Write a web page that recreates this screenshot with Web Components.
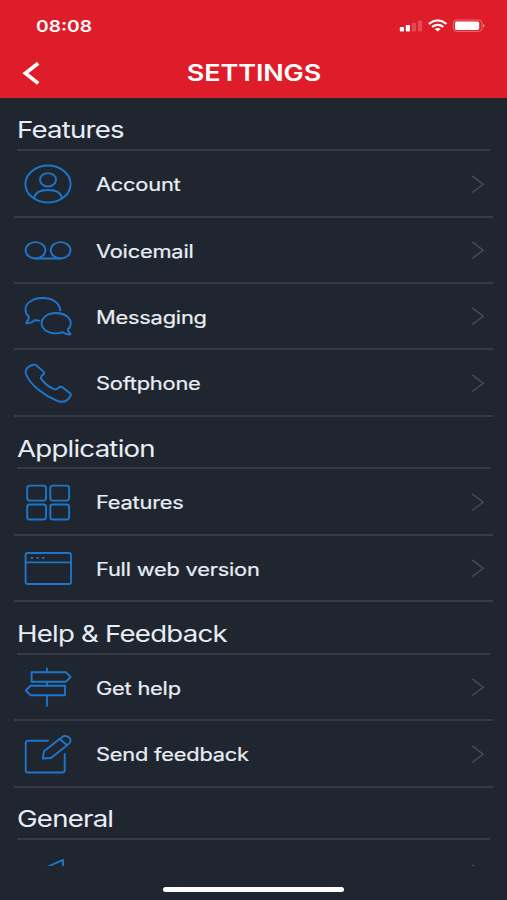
<!DOCTYPE html>
<html lang="en">
<head>
<meta charset="utf-8">
<meta name="viewport" content="width=device-width">
<title>Settings</title>
<style>
	html,body{
		height:100%;
		margin:0;
		overflow:hidden;
		background:#202630
	}

	body{
		font-family:Inter,"Liberation Sans",sans-serif;
		color:#e9edf5
	}
</style>
</head>
<body>
<settings-app>
	<status-bar slot="header" time="08:08"></status-bar>
	<nav-bar slot="header">SETTINGS</nav-bar>

	<settings-section heading="Features">
		<settings-row icon="account">Account</settings-row>
		<settings-row icon="voicemail">Voicemail</settings-row>
		<settings-row icon="messaging">Messaging</settings-row>
		<settings-row icon="softphone">Softphone</settings-row>
	</settings-section>
	<settings-section heading="Application">
		<settings-row icon="features">Features</settings-row>
		<settings-row icon="web">Full web version</settings-row>
	</settings-section>
	<settings-section heading="Help &amp; Feedback">
		<settings-row icon="help">Get help</settings-row>
		<settings-row icon="feedback">Send feedback</settings-row>
	</settings-section>
	<settings-section heading="General">
		<settings-row icon="plane"></settings-row>
	</settings-section>
</settings-app>

<script>
// Every icon is drawn in a 48x40 box
const icons = {
	account:
		'<ellipse cx="24" cy="20" rx="22.6" ry="18.5"/>' +
		'<ellipse cx="24" cy="15.8" rx="8" ry="6.7"/>' +
		'<path d="M10.2 34C11 28.8 16.5 26 24 26S37 28.8 37.8 34"/>',
	voicemail:
		'<ellipse cx="11.5" cy="20.3" rx="9.9" ry="8.2"/>' +
		'<ellipse cx="36.6" cy="20.3" rx="9.9" ry="8.2"/>' +
		'<path d="M11.5 28.5H36.6"/>',
	messaging:
		'<path d="M15.4 24.6Q13 24.6 11.2 24Q7 27.6 2.6 27.2Q1.8 27 2.6 26.1Q5.4 22.8 4.8 20.8Q1.5 17.5 1.5 13.4C1.5 6.9 9 2 18.7 2C28.5 2 36 7.2 36.2 14.4"/>' +
		'<path d="M46.2 38.4Q42 38.7 38.8 36.2Q35.8 37.4 32 37.4C23.8 37.4 17.6 32.9 17.6 27.2S23.8 17 32 17S46.8 21.5 46.8 27.2Q46.8 31 43.8 33.4Q43.8 35.6 46.2 37.6Q47 38.3 46.2 38.4Z"/>',
	softphone:
		'<path d="M9.4 1.7Q11 1.3 12.5 2.5L19.5 8.6Q21 10.3 19 11.8Q16 14 17.2 15.9C20.2 20.1 24.8 23.9 30 26.2Q32.2 27 34.4 24.8Q36.3 22.9 38.8 24.4L46 30.2Q47.5 31.7 46.3 33.3C43.5 38.4 38.5 40 32.8 37.7C20.5 32.7 6.6 22.4 2.2 11.5C.2 6.3 4.1 2.8 9.4 1.7Z"/>',
	features:
		'<rect x="3.2" y="3.6" width="18.8" height="15" rx="2.5"/>' +
		'<rect x="26.3" y="3.6" width="18.8" height="15" rx="2.5"/>' +
		'<rect x="3.2" y="22.5" width="18.8" height="15" rx="2.5"/>' +
		'<rect x="26.3" y="22.5" width="18.8" height="15" rx="2.5"/>',
	web:
		'<rect x="1.6" y="5" width="45.4" height="31" rx="2"/>' +
		'<path d="M1.6 14.4H47"/>' +
		'<path d="M7.6 10h.6M13.3 10h.6M19 10h.6" stroke-width="2.1"/>',
	help:
		'<path d="M23 1.5V5M23 14.8V18.8M23 28.2V38.8"/>' +
		'<path d="M7.6 5.2H41.8L46.6 10L41.8 14.8H7.6Z"/>' +
		'<path d="M41 18.8H6.6L1.8 23.5L6.6 28.2H41Z"/>',
	feedback:
		'<path d="M24 6.8H4.2Q1.7 6.8 1.7 9V36.2Q1.7 38.5 4.2 38.5H38Q40.7 38.5 40.7 36.2V20"/>' +
		'<path d="M18.8 24.5L20 17.2L37.8 3.2Q41.4 .8 45 3.5Q48.1 6.4 45.2 9.4L27 24Z"/>' +
		'<path d="M35.7 5L42.9 11"/>',
	plane:
		'<path d="M39 6.8L1.8 23.6L17 28L39.6 38.5Z"/>'
};

const createTemplate = html => Object.assign(document.createElement('template'), {innerHTML: html});

const define = (tagName, html, setup) => {
	const template = createTemplate(html);

	customElements.define(tagName, class extends HTMLElement {
		constructor() {
			super();
			this.attachShadow({mode: 'open'}).append(template.content.cloneNode(true));
			if (setup) {
				setup(this, this.shadowRoot);
			}
		}
	});
};

// Text in the wide cut used everywhere in the app
define('wide-text', `
	<style>
		:host{
			display:block;
			width:max-content;
			line-height:1;
			white-space:nowrap;
			transform:scaleX(1.2);
			transform-origin:var(--origin,left) center
		}
	</style>
	<slot></slot>
`);

define('status-bar', `
	<style>
		:host{
			display:flex;
			justify-content:space-between;
			height:52px;
			padding:0 22px 0 36px;
			box-sizing:border-box;
			color:#fff
		}

		wide-text{
			margin-top:18px;
			font-size:16px;
			font-weight:600
		}

		svg{
			margin-top:18px
		}
	</style>
	<wide-text></wide-text>
	<svg width="86" height="16" viewBox="0 0 86 16" fill="#fff">
		<rect x=".8" y="9" width="4.2" height="4.6" rx=".8"/>
		<rect x="6.8" y="7" width="4.2" height="6.6" rx=".8"/>
		<rect x="12.8" y="4.8" width="4.2" height="8.8" rx=".8" opacity=".2"/>
		<rect x="18.9" y="2.4" width="4.2" height="11.2" rx=".8" opacity=".2"/>
		<g fill="none" stroke="#fff" stroke-width="2.2">
			<path d="M29.9 5.8Q38.7-.9 47.5 5.8"/>
			<path d="M33.1 8.9Q38.7 4.8 44.3 8.9"/>
		</g>
		<path d="M35.7 11Q38.7 8.9 41.7 11L38.7 13.6Z"/>
		<rect x="54.3" y="2" width="28.6" height="11.4" rx="3.2" fill="none" stroke="#fff" opacity=".36"/>
		<rect x="56" y="3.5" width="24.2" height="8.4" rx="1.6"/>
		<path d="M84 6Q85.6 6.7 85.6 7.7T84 9.4Z" opacity=".5"/>
	</svg>
`, (host, root) => {
	root.querySelector('wide-text').textContent = host.getAttribute('time');
});

define('nav-bar', `
	<style>
		:host{
			display:grid;
			grid-template-columns:1fr auto 1fr;
			align-items:start;
			height:46px;
			color:#fff;
			--origin:center
		}

		svg{
			margin:9px 0 0 22px
		}

		wide-text{
			margin-top:9.5px;
			font-size:22.5px;
			font-weight:600;
			letter-spacing:-.1px
		}
	</style>
	<svg width="20" height="26" viewBox="0 0 20 26" fill="none" stroke="#fff" stroke-width="3.7"><path d="M16.2 2.2L3.4 12.2L16.2 22.4"/></svg>
	<wide-text><slot></slot></wide-text>
`);

define('settings-row', `
	<style>
		:host{
			display:flex;
			align-items:center;
			height:66.35px;
			margin:0 14px;
			padding:.4px 8px 0 10px;
			box-sizing:border-box;
			border-bottom:2px solid #353b45
		}

		wide-text{
			flex:1;
			width:auto;
			margin:1.2px 0 0 23.8px;
			font-size:18.2px;
			font-weight:400;
			letter-spacing:-.18px;
			-webkit-text-stroke:.2px currentColor
		}

		.icon{
			stroke:#1e76ca;
			stroke-width:1.9;
			stroke-linecap:round;
			stroke-linejoin:round
		}
	</style>
	<svg class="icon" width="48" height="40" viewBox="0 0 48 40" fill="none"></svg>
	<wide-text><slot></slot></wide-text>
	<svg width="14" height="20" viewBox="0 0 14 20" fill="none" stroke="#474e58" stroke-width="1.4"><path d="M1.2 1.9L12.2 10.2L1.2 18.5"/></svg>
`, (host, root) => {
	root.querySelector('.icon').innerHTML = icons[host.getAttribute('icon')];
});

define('settings-section', `
	<style>
		:host{
			display:block
		}

		header{
			height:52.75px;
			margin:0 17px;
			padding-top:20.9px;
			box-sizing:border-box;
			border-bottom:2px solid #353b45
		}

		wide-text{
			font-size:23px;
			letter-spacing:-.64px
		}
	</style>
	<header><wide-text></wide-text></header>
	<slot></slot>
`, (host, root) => {
	root.querySelector('wide-text').textContent = host.getAttribute('heading');
});

define('settings-app', `
	<style>
		:host{
			display:flex;
			flex-direction:column;
			height:100vh
		}

		header{
			flex:none;
			height:98px;
			background:#df1c2a
		}

		main{
			flex:1;
			min-height:0;
			padding-top:.6px;
			overflow:hidden
		}

		footer{
			display:flex;
			flex:none;
			justify-content:center;
			height:34px;
			padding-top:20.5px;
			box-sizing:border-box
		}

		i{
			width:181px;
			height:5.5px;
			border-radius:3px;
			background:#fff
		}
	</style>
	<header><slot name="header"></slot></header>
	<main><slot></slot></main>
	<footer><i></i></footer>
`);
</script>
</body>
</html>
